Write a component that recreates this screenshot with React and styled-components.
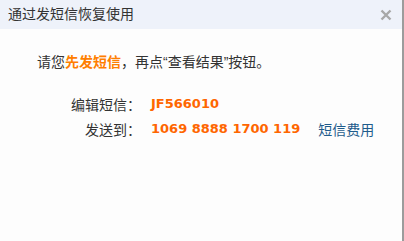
import React from "react"
import styled, { createGlobalStyle } from "styled-components"

const Global = createGlobalStyle`
	html, body {
		margin: 0;
		padding: 0;
		background: #fdfdfd;
	}
`

const Dialog = styled.div`
	width: 404px;
	height: 241px;
	box-sizing: border-box;
	border-right: 2px solid #9c9c9c;
	background: #fdfdfd;
	font-family: "Liberation Sans", "Noto Sans CJK SC", sans-serif;
	font-size: 14px;
	color: #333;
`

const Header = styled.div`
	height: 29px;
	display: flex;
	align-items: center;
	justify-content: space-between;
	padding: 0 8px 0 8px;
	background: #eef2fa;
`

const Title = styled.span`
	font-size: 14px;
	line-height: 29px;
	color: #333;
`

const Close = styled.button`
	display: flex;
	align-items: center;
	justify-content: center;
	width: 16px;
	height: 16px;
	padding: 0;
	margin-right: 0;
	border: none;
	background: none;
	cursor: pointer;
`

const Body = styled.div`
	padding: 23px 0 0 37px;
`

const Notice = styled.p`
	margin: 0;
	line-height: 20px;
`

const Strong = styled.b`
	color: #ff7e00;
	font-weight: bold;
`

const Table = styled.div`
	display: grid;
	grid-template-columns: 104px auto auto;
	justify-content: start;
	column-gap: 10px;
	margin-top: 19px;
	grid-auto-rows: 25px;
	align-items: center;
`

const Label = styled.span`
	text-align: right;
`

const Value = styled.span`
	font-family: "DejaVu Sans", sans-serif;
	font-weight: bold;
	font-size: 13px;
	color: #ff6600;
`

const Link = styled.a`
	margin-left: 8px;
	color: #1f5c8c;
	text-decoration: none;
`

const CloseIcon = () => (
	<svg width="12" height="12" viewBox="0 0 12 12">
		<path d="M1.5 1.5 L10.5 10.5 M10.5 1.5 L1.5 10.5" stroke="#a8a8a8" strokeWidth="2.4" />
	</svg>
)

const rows = [
	{ label: "编辑短信：", value: "JF566010" },
	{ label: "发送到：", value: "1069 8888 1700 119", link: "短信费用" },
]

const App = () => {
	return (
		<Dialog>
			<Global />
			<Header>
				<Title>通过发短信恢复使用</Title>
				<Close aria-label="关闭">
					<CloseIcon />
				</Close>
			</Header>
			<Body>
				<Notice>
					请您<Strong>先发短信</Strong>，再点“查看结果”按钮。
				</Notice>
				<Table>
					{rows.map(row => (
						<React.Fragment key={row.label}>
							<Label>{row.label}</Label>
							<Value>{row.value}</Value>
							<span>{row.link && <Link href="#">{row.link}</Link>}</span>
						</React.Fragment>
					))}
				</Table>
			</Body>
		</Dialog>
	)
}

export default App
